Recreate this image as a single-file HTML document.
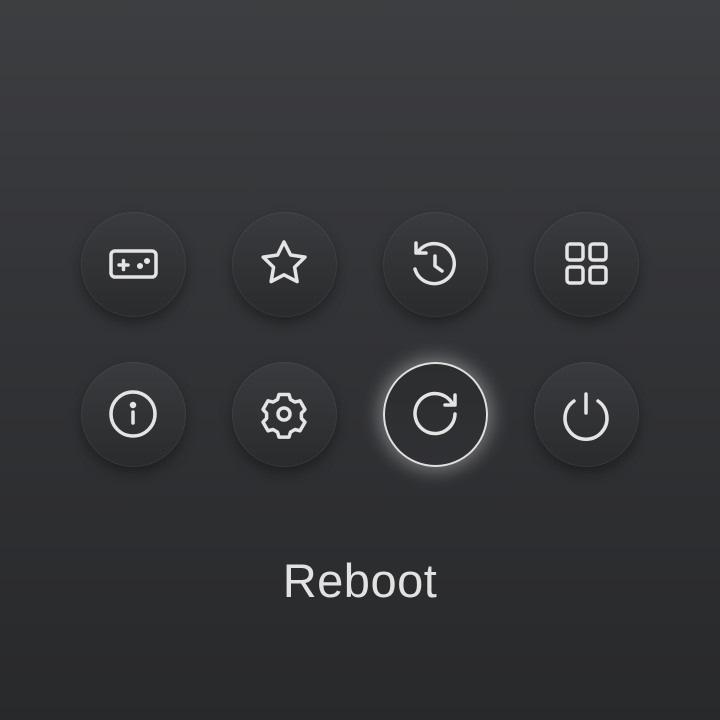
<!DOCTYPE html>
<html><head><style>
html,body{margin:0;padding:0}
body{width:720px;height:720px;position:relative;overflow:hidden;background:linear-gradient(180deg,#3d3e41 0%,#333437 40%,#28292b 100%);font-family:"Liberation Sans",sans-serif}
.b{position:absolute;width:105px;height:105px;border-radius:50%;background:linear-gradient(180deg,#3a3b3e,#2a2b2d);box-shadow:0 6px 12px rgba(0,0,0,.35),inset 0 0 0 1px rgba(255,255,255,.05)}
.sel{background:linear-gradient(180deg,#2c2d2f,#303134);box-shadow:0 0 18px 4px rgba(255,255,255,.35),inset 0 0 0 2px #e0e0e0}
.t{position:absolute;left:0;width:720px;top:553px;text-align:center;font-size:47px;color:#e2e2e2;letter-spacing:0.5px}
svg{position:absolute;left:0;top:0}
</style></head><body>
<div class="b" style="left:81px;top:212px"></div>
<div class="b" style="left:232px;top:212px"></div>
<div class="b" style="left:383px;top:212px"></div>
<div class="b" style="left:534px;top:212px"></div>
<div class="b" style="left:81px;top:362px"></div>
<div class="b" style="left:232px;top:362px"></div>
<div class="b sel" style="left:383px;top:362px"></div>
<div class="b" style="left:534px;top:362px"></div>
<svg width="720" height="720" fill="none" stroke="#e4e4e4" stroke-width="3.5" stroke-linecap="round" stroke-linejoin="round">
<rect x="111" y="251" width="45" height="26" rx="4"/>
<path d="M119 265h9M123.5 260.5v9"/>
<circle cx="140" cy="266" r="1.3" fill="#e4e4e4"/><circle cx="147" cy="261" r="1.3" fill="#e4e4e4"/>
<path d="M284 242l6.6 13 14.4 2.1-10.4 10.2 2.5 14.3-13.1-6.8-12.9 6.8 2.5-14.3-10.4-10.2 14.4-2.1z"/>
<path d="M418 252a20 20 0 1 1-3 17"/>
<path d="M416 243v10h10"/>
<path d="M435 256v10l7 5"/>
<rect x="567" y="244" width="16" height="16" rx="3"/><rect x="590" y="244" width="16" height="16" rx="3"/>
<rect x="567" y="267" width="16" height="16" rx="3"/><rect x="590" y="267" width="16" height="16" rx="3"/>
<circle cx="133" cy="414" r="22"/>
<path d="M133 412v11"/><circle cx="133" cy="405" r="1.5" fill="#e4e4e4"/>
<path d="M279 394.5h10l1.5 5 4.5 2.6 5-1.3 5 8.7-3.6 3.7v5.2l3.6 3.7-5 8.7-5-1.3-4.5 2.6-1.5 5h-10l-1.5-5-4.5-2.6-5 1.3-5-8.7 3.6-3.7v-5.2l-3.6-3.7 5-8.7 5 1.3 4.5-2.6z"/>
<circle cx="284" cy="414" r="6"/>
<path d="M452 403a20 20 0 1 0 3 11"/>
<path d="M455 395v10h-10"/>
<path d="M586 394v19"/>
<path d="M574 401a21 21 0 1 0 24 0"/>
</svg>
<div class="t">Reboot</div>
</body></html>
